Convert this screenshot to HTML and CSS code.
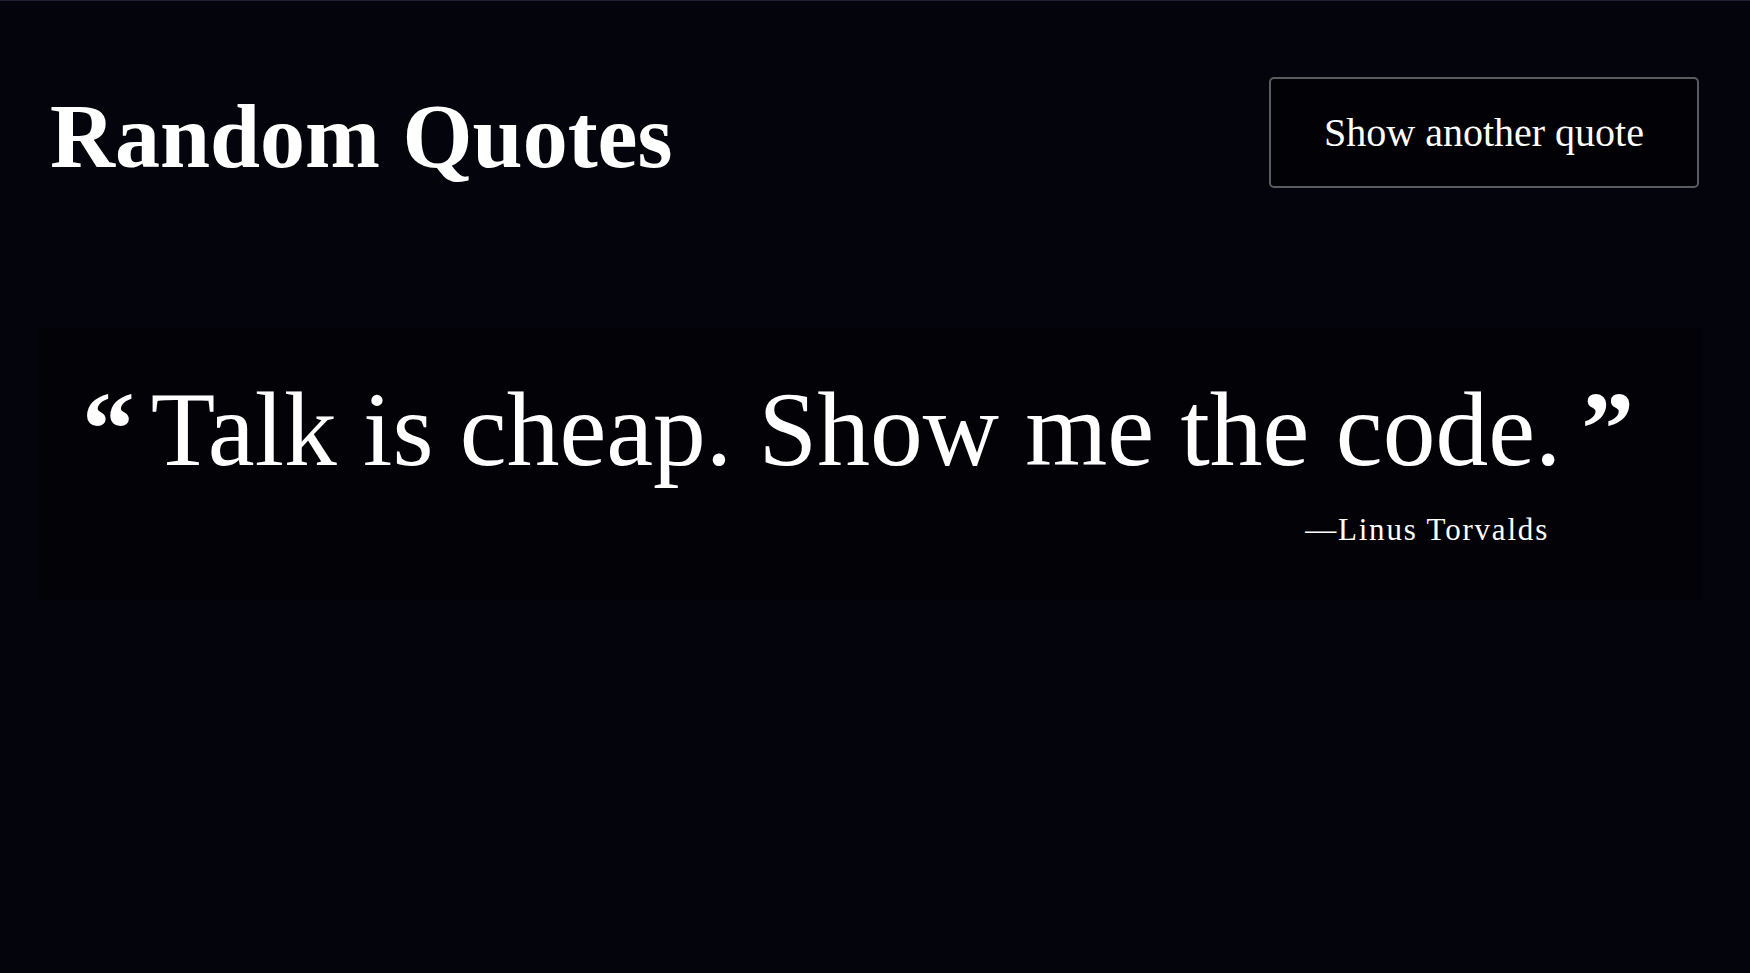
FILE: index.html
```html
<!DOCTYPE html>
<html lang="en">
<head>
<meta charset="utf-8">
<title>Random Quotes</title>
<link rel="stylesheet" href="styles.css">
</head>
<body>
  <header class="header">
    <h1 class="title">Random Quotes</h1>
    <button class="btn" type="button">Show another quote</button>
  </header>
  <main class="card">
    <p class="quote"><span class="mark open">“</span>Talk is cheap. Show me the code.<span class="mark close">”</span></p>
    <p class="author">—Linus Torvalds</p>
  </main>
</body>
</html>
```

FILE: styles.css
```css
html, body {
  margin: 0;
  padding: 0;
}
body {
  background: #04040c;
  border-top: 1px solid #1d2036;
  min-height: 972px;
  color: #ffffff;
  font-family: "Liberation Serif", "Times New Roman", serif;
}
.header {
  display: flex;
  justify-content: space-between;
  align-items: flex-start;
  padding: 76px 51px 0 50px;
}
.title {
  margin: 10px 0 0 0;
  font-size: 90px;
  line-height: 100px;
  font-weight: 700;
  color: #ffffff;
}
.btn {
  box-sizing: border-box;
  width: 430px;
  height: 111px;
  display: flex;
  align-items: center;
  justify-content: center;
  background: #020206;
  border: 2px solid #5a5a60;
  border-radius: 5px;
  color: #ffffff;
  font-family: "Liberation Serif", "Times New Roman", serif;
  font-size: 40px;
  line-height: 46px;
  padding: 0;
  cursor: pointer;
}
.card {
  display: block;
  margin: 140px 0 0 38px;
  width: 1665px;
  background: #020207;
  padding: 42px 0 52px 44px;
  box-sizing: border-box;
}
.quote {
  margin: 0;
  font-size: 105.5px;
  line-height: 120px;
  white-space: nowrap;
}
.mark {
  font-weight: 700;
}
.open {
  margin-right: 16px;
}
.close {
  margin-left: 20px;
}
.author {
  margin: 22px 0 0 0;
  text-align: right;
  padding-right: 154px;
  font-size: 31px;
  line-height: 36px;
  letter-spacing: 1.8px;
}
```
